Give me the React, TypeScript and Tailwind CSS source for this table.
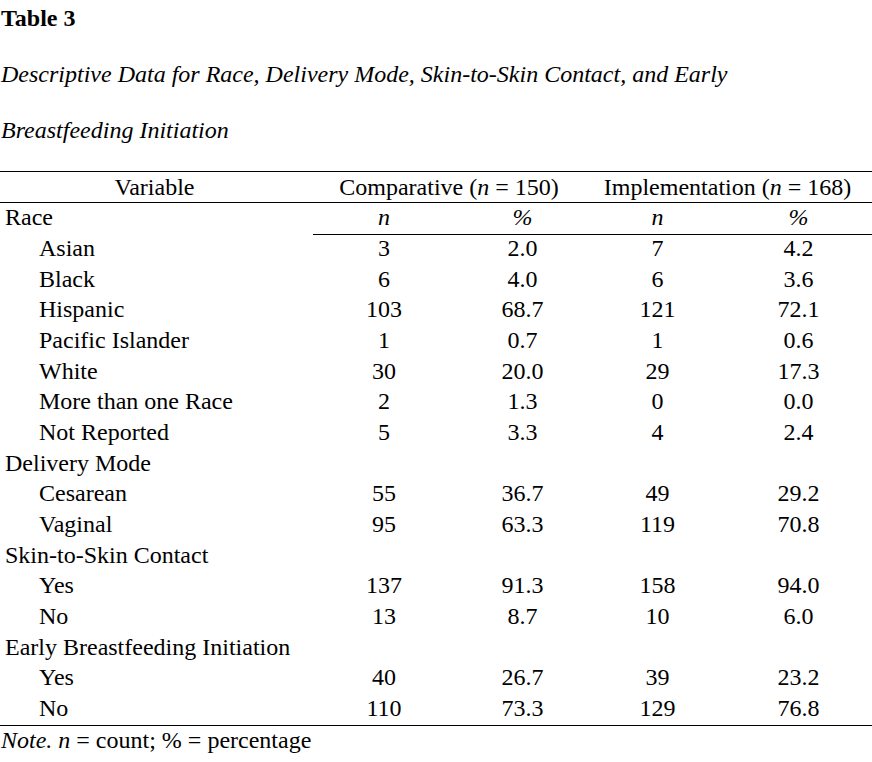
const groups: { label: string; rows: [string, string, string, string, string][] }[] = [
  {
    label: "Race",
    rows: [
      ["Asian", "3", "2.0", "7", "4.2"],
      ["Black", "6", "4.0", "6", "3.6"],
      ["Hispanic", "103", "68.7", "121", "72.1"],
      ["Pacific Islander", "1", "0.7", "1", "0.6"],
      ["White", "30", "20.0", "29", "17.3"],
      ["More than one Race", "2", "1.3", "0", "0.0"],
      ["Not Reported", "5", "3.3", "4", "2.4"],
    ],
  },
  {
    label: "Delivery Mode",
    rows: [
      ["Cesarean", "55", "36.7", "49", "29.2"],
      ["Vaginal", "95", "63.3", "119", "70.8"],
    ],
  },
  {
    label: "Skin-to-Skin Contact",
    rows: [
      ["Yes", "137", "91.3", "158", "94.0"],
      ["No", "13", "8.7", "10", "6.0"],
    ],
  },
  {
    label: "Early Breastfeeding Initiation",
    rows: [
      ["Yes", "40", "26.7", "39", "23.2"],
      ["No", "110", "73.3", "129", "76.8"],
    ],
  },
];

export default function App() {
  return (
    <div className="w-[872px] h-[762px] bg-white text-black font-['Liberation_Serif',serif] text-[24px] leading-none overflow-hidden">
      <div className="pl-[1px] pt-[6px]">
        <h1 className="font-bold h-[24px] leading-[24px]">Table 3</h1>
        <p className="italic mt-[32px] h-[24px] leading-[24px]">
          Descriptive Data for Race, Delivery Mode, Skin-to-Skin Contact, and Early
        </p>
        <p className="italic mt-[32px] h-[24px] leading-[24px]">Breastfeeding Initiation</p>
      </div>

      <table className="mt-[29px] w-[872px] border-collapse table-fixed">
        <colgroup>
          <col className="w-[313px]" />
          <col className="w-[142px]" />
          <col className="w-[135px]" />
          <col className="w-[135px]" />
          <col className="w-[147px]" />
        </colgroup>
        <thead>
          <tr className="h-[31px] border-t border-b border-black">
            <th className="font-normal text-center pr-[4px]">Variable</th>
            <th colSpan={2} className="font-normal text-center pr-[5px]">
              Comparative (<i>n</i> = 150)
            </th>
            <th colSpan={2} className="font-normal text-center pr-[7px]">
              Implementation (<i>n</i> = 168)
            </th>
          </tr>
          <tr className="h-[32px]">
            <th className="font-normal text-left pl-[5px] pb-[3px]">Race</th>
            <th className="font-normal italic text-center border-b border-black pb-[3px]">n</th>
            <th className="font-normal italic text-center border-b border-black pb-[3px]">%</th>
            <th className="font-normal italic text-center border-b border-black pb-[3px]">n</th>
            <th className="font-normal italic text-center border-b border-black pb-[3px]">%</th>
          </tr>
        </thead>
        <tbody className="border-b border-black">
          {groups.map((g, gi) => (
            <>
              {gi > 0 && (
                <tr key={g.label} className="h-[30.7px]">
                  <td className="pl-[5px] whitespace-nowrap pb-[4px]">{g.label}</td>
                  <td colSpan={4}></td>
                </tr>
              )}
              {g.rows.map((r) => (
                <tr key={g.label + r[0]} className="h-[30.7px] [&>td]:pb-[4px]">
                  <td className="pl-[39px] whitespace-nowrap">{r[0]}</td>
                  <td className="text-center">{r[1]}</td>
                  <td className="text-center">{r[2]}</td>
                  <td className="text-center">{r[3]}</td>
                  <td className="text-center">{r[4]}</td>
                </tr>
              ))}
            </>
          ))}
        </tbody>
      </table>
      <p className="pl-[1px] mt-[2px]">
        <i>Note.</i> <i>n</i> = count; % = percentage
      </p>
    </div>
  );
}
